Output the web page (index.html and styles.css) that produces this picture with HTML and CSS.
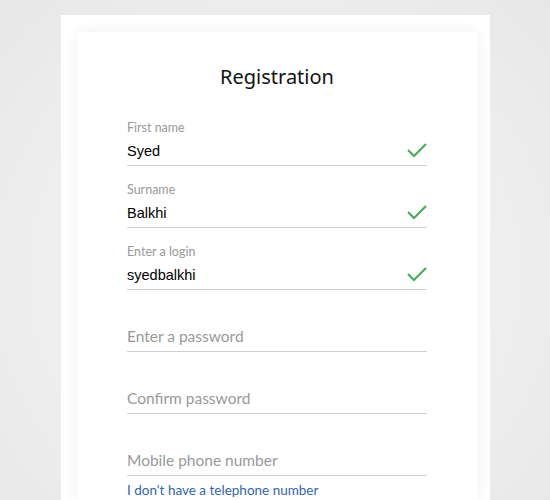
FILE: index.html
```html
<!DOCTYPE html>
<html lang="en">
<head>
  <meta charset="UTF-8" />
  <title>Registration</title>
  <link rel="stylesheet" href="styles.css">
</head>
<body>
  <div class="panel">
    <div class="card">
      <h1 class="title">Registration</h1>

      <div class="field">
        <div class="label">First name</div>
        <div class="value">Syed</div>
        <svg class="check" viewBox="0 0 20 16"><polyline points="1,8 7,14 19,2" /></svg>
      </div>
      <div class="field">
        <div class="label">Surname</div>
        <div class="value">Balkhi</div>
        <svg class="check" viewBox="0 0 20 16"><polyline points="1,8 7,14 19,2" /></svg>
      </div>
      <div class="field">
        <div class="label">Enter a login</div>
        <div class="value">syedbalkhi</div>
        <svg class="check" viewBox="0 0 20 16"><polyline points="1,8 7,14 19,2" /></svg>
      </div>
      <div class="field">
        <div class="label"></div>
        <div class="placeholder">Enter a password</div>
      </div>
      <div class="field">
        <div class="label"></div>
        <div class="placeholder">Confirm password</div>
      </div>
      <div class="field">
        <div class="label"></div>
        <div class="placeholder">Mobile phone number</div>
      </div>
      <a class="link" href="#">I don't have a telephone number</a>
    </div>
  </div>
</body>
</html>
```

FILE: styles.css
```css
html, body {
  margin: 0;
  padding: 0;
  height: 100%;
}

body {
  background: radial-gradient(ellipse at 50% 55%, #f8f8f8 0%, #f1f1f1 45%, #e7e7e7 100%);
  font-family: 'Lato', sans-serif;
  overflow: hidden;
}

.panel {
  margin: 15px 0 0 61px;
  width: 429px;
  height: calc(100% - 15px);
  background: #fff;
  padding: 17px 0 0 16px;
  box-sizing: border-box;
}

.card {
  width: 400px;
  height: 100%;
  background: #fff;
  box-shadow: 0 0 14px rgba(0, 0, 0, 0.07);
  padding: 33px 50px 0;
  box-sizing: border-box;
}

.title {
  margin: 0 0 15px;
  font-family: 'Noto Sans', sans-serif;
  font-size: 20px;
  line-height: 24px;
  font-weight: 400;
  text-align: center;
  color: #111;
}

.field {
  position: relative;
  height: 62px;
  box-sizing: border-box;
  padding-top: 16px;
  border-bottom: 1px solid #cfcfcf;
}

.label {
  height: 16px;
  font-size: 12.5px;
  line-height: 16px;
  color: #999;
}

.value {
  margin-top: 5px;
  font-family: 'Liberation Sans', Arial, sans-serif;
  font-size: 14.5px;
  line-height: 20px;
  color: #000;
}

.placeholder {
  margin-top: 4px;
  font-size: 15.5px;
  line-height: 20px;
  color: #999;
}

.check {
  position: absolute;
  right: 0;
  top: 38px;
  width: 20px;
  height: 16px;
  fill: none;
  stroke: #45a85b;
  stroke-width: 2;
}

.link {
  display: block;
  margin-top: 5px;
  font-size: 13.5px;
  line-height: 18px;
  color: #3565a8;
  text-decoration: none;
}
```
